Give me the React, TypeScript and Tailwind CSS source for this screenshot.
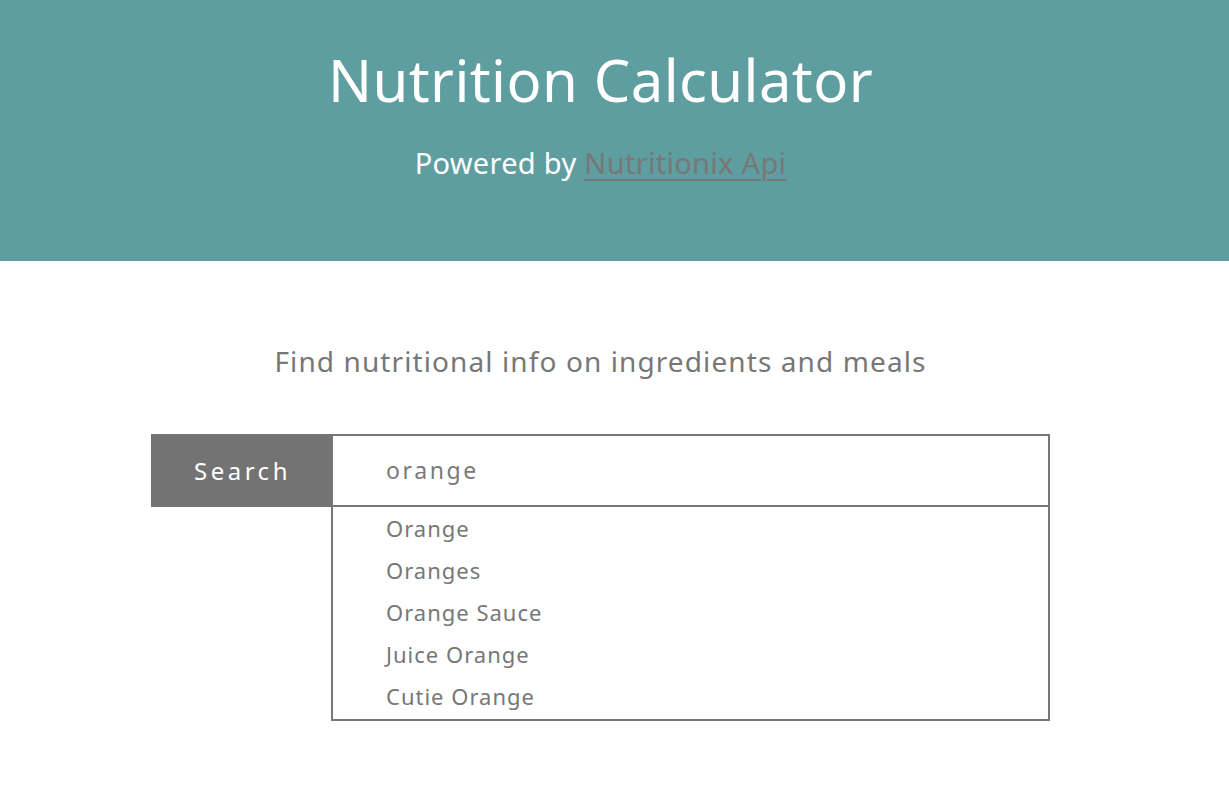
const suggestions = ['Orange', 'Oranges', 'Orange Sauce', 'Juice Orange', 'Cutie Orange']

const App = () => {
    return (
        <div className="min-h-[795px] bg-white font-['Noto_Sans',sans-serif]">
            {/* Header */}
            <header className="h-[261px] bg-[#5f9ea0] text-white">
                <div className="w-[1201px] flex flex-col items-center pt-[44px]">
                    <h1 className="text-[58px] leading-[72px] font-normal tracking-[0.4px]">Nutrition Calculator</h1>
                    <p className="mt-[27px] text-[29px] leading-[40px] tracking-[0.3px]">
                        Powered by{' '}
                        <a href="#" className="text-[#777777] underline underline-offset-[5px] decoration-[2px]">
                            Nutritionix Api
                        </a>
                    </p>
                </div>
            </header>

            {/* Search */}
            <main className="w-[1201px] flex flex-col items-center">
                <p className="mt-[80px] text-[28px] leading-[40px] tracking-[1.1px] text-[#777777]">
                    Find nutritional info on ingredients and meals
                </p>

                <div className="mt-[53px] w-[899px] flex">
                    <div className="w-[180px] h-[73px] bg-[#737373] flex items-center justify-center shrink-0">
                        <span className="text-white text-[24px] tracking-[3.5px] pl-[3px]">Search</span>
                    </div>
                    <div className="flex-1 flex flex-col">
                        <div className="h-[73px] border-2 border-[#777777] flex items-center pl-[53px]">
                            <input
                                className="w-full outline-none text-[23px] tracking-[2.6px] text-[#7a7a7a] bg-transparent"
                                defaultValue="orange"
                            />
                        </div>
                        <ul className="border-2 border-t-0 border-[#777777] pl-[53px] pb-[2px]">
                            {suggestions.map((item) => (
                                <li key={item} className="h-[42px] flex items-center text-[22px] tracking-[1px] text-[#777777]">
                                    {item}
                                </li>
                            ))}
                        </ul>
                    </div>
                </div>
            </main>
        </div>
    )
}

export default App
